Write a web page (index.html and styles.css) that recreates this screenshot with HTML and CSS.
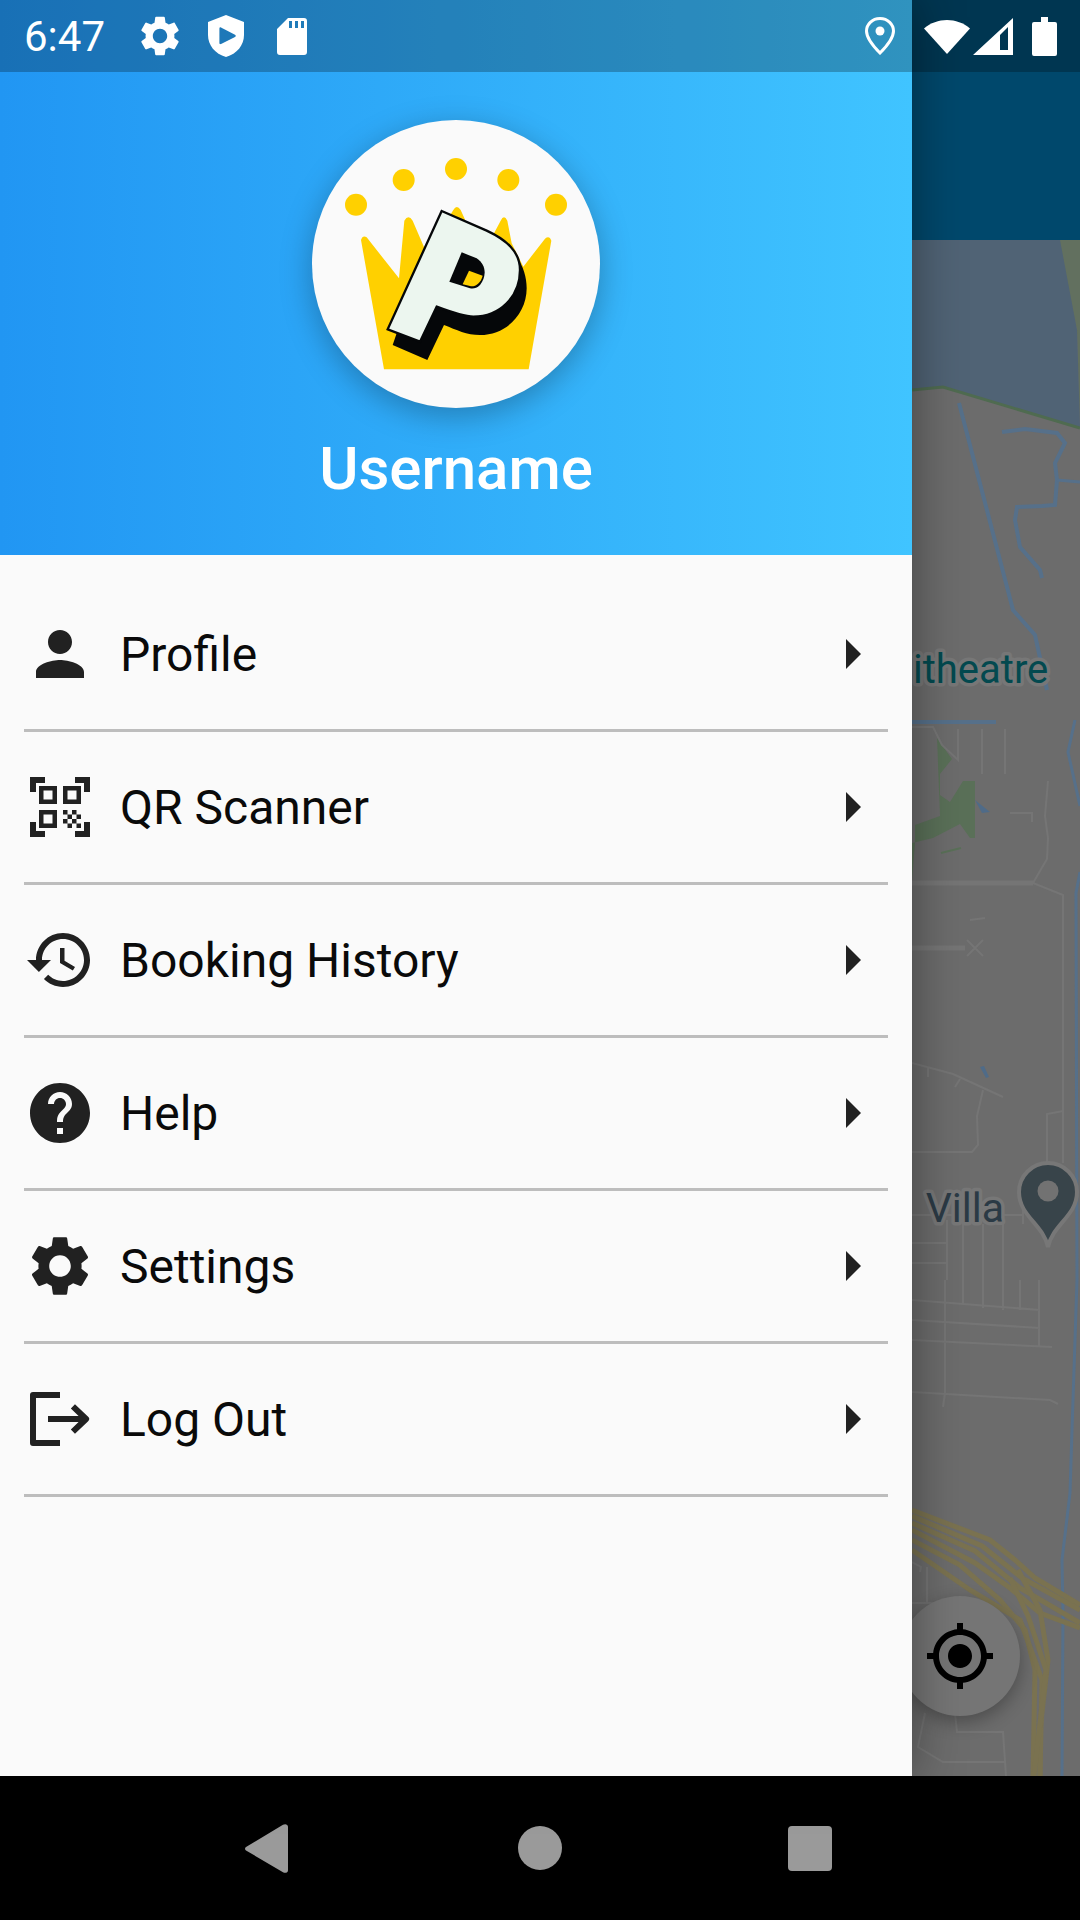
FILE: index.html
```html
<!DOCTYPE html>
<html lang="en">
<head>
  <meta charset="UTF-8">
  <meta name="viewport" content="width=device-width, initial-scale=1.0">
  <title>Drawer</title>
  <link rel="stylesheet" href="styles.css">
</head>
<body>
  <div class="screen">
    <div class="statusbar">
      <span class="time">6:47</span>
      <svg class="st-gear" viewBox="0 0 24 24"><path d="M19.14 12.94c.04-.3.06-.61.06-.94 0-.32-.02-.64-.07-.94l2.03-1.58c.18-.14.23-.41.12-.61l-1.92-3.32c-.12-.22-.37-.29-.59-.22l-2.39.96c-.5-.38-1.03-.7-1.62-.94l-.36-2.54c-.04-.24-.24-.41-.48-.41h-3.84c-.24 0-.43.17-.47.41l-.36 2.54c-.59.24-1.13.57-1.62.94l-2.39-.96c-.22-.08-.47 0-.59.22L2.74 8.87c-.12.21-.08.47.12.61l2.03 1.58c-.05.3-.09.63-.09.94s.02.64.07.94l-2.03 1.58c-.18.14-.23.41-.12.61l1.92 3.32c.12.22.37.29.59.22l2.39-.96c.5.38 1.03.7 1.62.94l.36 2.54c.05.24.24.41.48.41h3.84c.24 0 .44-.17.47-.41l.36-2.54c.59-.24 1.13-.56 1.62-.94l2.39.96c.22.08.47 0 .59-.22l1.92-3.32c.12-.22.07-.47-.12-.61l-2.01-1.58zM12 15.6c-1.98 0-3.6-1.62-3.6-3.6s1.62-3.6 3.6-3.6 3.6 1.62 3.6 3.6-1.62 3.6-3.6 3.6z"/></svg>
      <svg class="st-shield" viewBox="0 0 36 42"><path fill-rule="evenodd" d="M18 0L0 7v13c0 10 7 19 18 22 11-3 18-12 18-22V7zM13 12.5l14 7.2c1 .6 1 1.6 0 2.2l-14 7.2c-1 .4-1.6 0-1.6-1V13.5c0-1 .6-1.4 1.6-1z"/></svg>
      <svg class="st-sd" viewBox="0 0 30 37"><path fill-rule="evenodd" d="M11 0h16a3 3 0 0 1 3 3v31a3 3 0 0 1-3 3H3a3 3 0 0 1-3-3V11zM12 3v7h3V3zM18 3v7h3V3zM24 3v7h3V3z"/></svg>
      <svg class="st-pin" viewBox="0 0 30 38"><path class="pin-line" d="M15 1.5C7 1.5 1.5 7.5 1.5 14c0 7 7.5 16 13.5 22 6-6 13.500-15 13.500-22C28.500 7.500 23 1.500 15 1.500z"/><circle cx="15" cy="14" r="4.500"/></svg>
      <svg class="st-wifi" viewBox="0 0 46 40"><path d="M0 12.500C13 1 33 1 46 12.500L23 38z"/></svg>
      <svg class="st-signal" viewBox="0 0 40 37"><path fill-rule="evenodd" d="M40 0v37H0zM27 17v15h8V9z"/></svg>
      <svg class="st-battery" viewBox="0 0 25 39"><path d="M9 0h7v5h7a2 2 0 0 1 2 2v30a2 2 0 0 1-2 2H2a2 2 0 0 1-2-2V7a2 2 0 0 1 2-2h7z"/></svg>
    </div>

    <div class="content">
      <div class="drawer">
        <div class="drawer-header">
          <div class="avatar">
            <svg class="logo" viewBox="66 60 864 864">
              <g fill="#ffd000">
                <circle cx="198" cy="314" r="33"/>
                <circle cx="341" cy="240" r="33"/>
                <circle cx="498" cy="207" r="33"/>
                <circle cx="655" cy="240" r="33"/>
                <circle cx="798" cy="314" r="33"/>
                <path d="M282 808L213 420q5-15 17-8l97 123 16-173q12-20 25 0l42 98 80-130q10-18 22 0l18 40 30 30h52l20-38q10-20 20 0l13 68 35 70 65-84q13-11 19 6l-68 386z"/>
              </g>
              <path fill="#050709" d="M320 700l-12 35 104 45 50-105c38 15 68 30 108 30 80 0 140-65 140-140 0-35-10-65-30-95L500 500z"/>
              <path fill="#ecf6ef" stroke="#050709" stroke-width="7" d="M455 333l135 59c60 28 100 63 100 118 0 80-60 140-140 140-30 0-70-15-110-30l-50 105-97-37z"/>
              <path fill="#050709" d="M515 457l45 18c30 20 30 55 10 80-10 10-20 12-30 10l-62-20z"/>
              <path fill="#ffd000" d="M537 512l41 15c-5 20-20 33-35 32l-25-6z"/>
            </svg>
          </div>
          <div class="username">Username</div>
        </div>

        <ul class="menu">
          <li class="menu-item">
            <svg class="menu-icon" viewBox="0 0 24 24"><path d="M12 12c2.210 0 4-1.790 4-4s-1.790-4-4-4-4 1.790-4 4 1.790 4 4 4zm0 2c-2.670 0-8 1.340-8 4v2h16v-2c0-2.660-5.330-4-8-4z"/></svg>
            <span class="menu-label">Profile</span>
            <svg class="menu-arrow" viewBox="0 0 24 24"><path d="M10 17l5-5-5-5v10z"/></svg>
          </li>
          <li class="menu-item">
            <svg class="menu-icon" viewBox="0 0 24 24"><path d="M9.500 6.500v3h-3v-3h3M11 5H5v6h6V5zm-1.500 9.500v3h-3v-3h3M11 13H5v6h6v-6zm6.500-6.500v3h-3v-3h3M19 5h-6v6h6V5zm-6 8h1.500v1.500H13V13zm1.500 1.500H16V16h-1.500v-1.500zM16 13h1.500v1.500H16V13zm-3 3h1.500v1.500H13V16zm1.500 1.500H16V19h-1.500v-1.500zM16 16h1.500v1.500H16V16zm1.500-1.500H19V16h-1.500v-1.500zm0 3H19V19h-1.500v-1.500zM22 7h-2V4h-3V2h5v5zm0 15v-5h-2v3h-3v2h5zM2 22h5v-2H4v-3H2v5zM2 2v5h2V4h3V2H2z"/></svg>
            <span class="menu-label">QR Scanner</span>
            <svg class="menu-arrow" viewBox="0 0 24 24"><path d="M10 17l5-5-5-5v10z"/></svg>
          </li>
          <li class="menu-item">
            <svg class="menu-icon" viewBox="0 0 24 24"><path d="M13 3c-4.970 0-9 4.030-9 9H1l3.890 3.890.07.140L9 12H6c0-3.870 3.130-7 7-7s7 3.130 7 7-3.130 7-7 7c-1.930 0-3.680-.79-4.940-2.060l-1.420 1.420C8.270 19.990 10.510 21 13 21c4.970 0 9-4.030 9-9s-4.030-9-9-9zm-1 5v5l4.280 2.540.72-1.210-3.500-2.080V8H12z"/></svg>
            <span class="menu-label">Booking History</span>
            <svg class="menu-arrow" viewBox="0 0 24 24"><path d="M10 17l5-5-5-5v10z"/></svg>
          </li>
          <li class="menu-item">
            <svg class="menu-icon" viewBox="0 0 24 24"><path d="M12 2C6.480 2 2 6.480 2 12s4.480 10 10 10 10-4.480 10-10S17.520 2 12 2zm1 17h-2v-2h2v2zm2.070-7.750l-.9.920C13.450 12.900 13 13.500 13 15h-2v-.5c0-1.100.450-2.100 1.170-2.830l1.240-1.260c.370-.360.590-.860.590-1.410 0-1.100-.9-2-2-2s-2 .9-2 2H8c0-2.210 1.790-4 4-4s4 1.790 4 4c0 .880-.360 1.680-.93 2.250z"/></svg>
            <span class="menu-label">Help</span>
            <svg class="menu-arrow" viewBox="0 0 24 24"><path d="M10 17l5-5-5-5v10z"/></svg>
          </li>
          <li class="menu-item">
            <svg class="menu-icon" viewBox="0 0 24 24"><path d="M19.14 12.94c.04-.3.06-.61.06-.94 0-.32-.02-.64-.07-.94l2.03-1.58c.18-.14.23-.41.12-.61l-1.92-3.32c-.12-.22-.37-.29-.59-.22l-2.39.96c-.5-.38-1.03-.7-1.62-.94l-.36-2.54c-.04-.24-.24-.41-.48-.41h-3.84c-.24 0-.43.17-.47.41l-.36 2.54c-.59.24-1.13.57-1.62.94l-2.39-.96c-.22-.08-.47 0-.59.22L2.74 8.87c-.12.21-.08.47.12.61l2.03 1.58c-.05.3-.09.63-.09.94s.02.64.07.94l-2.03 1.58c-.18.14-.23.41-.12.61l1.92 3.32c.12.22.37.29.59.22l2.39-.96c.5.38 1.03.7 1.62.94l.36 2.54c.05.24.24.41.48.41h3.84c.24 0 .44-.17.47-.41l.36-2.54c.59-.24 1.13-.56 1.62-.94l2.39.96c.22.08.47 0 .59-.22l1.92-3.32c.12-.22.07-.47-.12-.61l-2.01-1.58zM12 15.600c-1.980 0-3.600-1.620-3.600-3.600s1.620-3.600 3.600-3.600 3.600 1.620 3.600 3.600-1.620 3.600-3.600 3.600z"/></svg>
            <span class="menu-label">Settings</span>
            <svg class="menu-arrow" viewBox="0 0 24 24"><path d="M10 17l5-5-5-5v10z"/></svg>
          </li>
          <li class="menu-item">
            <svg class="menu-icon" viewBox="0 0 24 24"><path class="logout-line" d="M12 4H3v16h9M8 12h13M16.300 7.800l4.400 4.200-4.400 4.200"/></svg>
            <span class="menu-label">Log Out</span>
            <svg class="menu-arrow" viewBox="0 0 24 24"><path d="M10 17l5-5-5-5v10z"/></svg>
          </li>
        </ul>
      </div>

      <div class="scene">
        <div class="appbar"></div>
        <div class="map">
          <!-- map tiles, coordinates are screen pixels -->
          <svg class="map-tiles" viewBox="912 240 168 1536">
            <rect class="land" x="912" y="240" width="168" height="1536"/>
            <path class="shore" d="M1058 240h22v188l-3-98z"/>
            <path class="water" d="M912 240h148l17 90 3 98-137-41-31 3z"/>
            <path class="shore-line" d="M912 390l31-3 137 41"/>
            <path class="park" d="M937 738l15 21-12 15v21l10 7 13-21h12v57h-5l-10-14-27 14-21 5v37l3-37 0-18 25-9z"/>
            <path class="park-line" d="M941 853l20-5"/>
            <path class="pond" d="M975 800l15 12-8 1zM980 1067l4-1 5 11-3 1z"/>
            <g class="roads">
              <path d="M912 727h21l9 18 16 15v-31M982 729v45M1005 729v45M1010 813h22v9"/>
              <path d="M1048 781l-3 35 3 22-1 21-14 24 30 12v268M1047 1163v-49l16-3"/>
              <path class="road-wide" d="M912 883h121M912 948h53"/>
              <path d="M967 940l16 16M983 940l-16 16M970 920l15-2"/>
              <path d="M912 1063l41 11 50 23M983 1090l-6 26 1 29-6 7h-60M928 1068v9M960 1079l-5 8"/>
              <path d="M912 1215h111M963 1224v56M983 1224v56M1003 1224v56M1023 1224v-43M912 1243h35M912 1263h35M947 1220v60"/>
              <path d="M912 1300l128 10M912 1320l128 8M912 1340l140 7M912 1392l138 8 8 4M945 1280v113M963 1280v25M983 1280v28M1003 1280v30M1020 1280v30M1039 1280v67"/>
              <path d="M945 1393l-2 14M912 1562l9 5-1 5M927 1567v36M912 1603h48M955 1713l2 19h46l3 44M925 1713l-7 34 25 15h63"/>
            </g>
            <g class="rivers">
              <path d="M959 403l54 207 22 25 12 55"/>
              <path d="M1002 432l23-3 32 4 8 10-10 20 2 17-2 25-13 1-25 1-2 13 5 27 20 23 2 8"/>
              <path class="river-thin" d="M1057 480l23 2M1075 720l-7 32 12 54M1080 872l-4 21 1 387-5 150-2 63-8 67 1 53-1 163"/>
              <path class="river-wide" d="M912 722h84"/>
            </g>
            <g class="highways">
              <path d="M912 1510l78 30 25 20 20 18 45 27"/>
              <path d="M912 1516l70 30 40 32 58 32"/>
              <path d="M912 1523l63 28 45 37 60 35"/>
              <path d="M912 1530l63 33 35 25 30 25 40 15"/>
              <path d="M912 1540l48 25 40 35 25 30 10 40-2 106"/>
              <path d="M912 1550l58 40 50 30 22 60-2 96"/>
              <path d="M1018 1570l22 40 8 50-8 70v46"/>
              <path d="M1010 1578l18 38 18 54-12 106"/>
            </g>
            <text class="map-label map-teal" x="913" y="683">itheatre</text>
            <text class="map-label map-slate" x="1004" y="1222" text-anchor="end">Villa</text>
            <path class="map-pin" d="M1048 1163c-16 0-29 13-29 29 0 24 24 32 29 55 5-23 29-31 29-55 0-16-13-29-29-29z"/>
            <circle class="map-pin-dot" cx="1048" cy="1191" r="10.500"/>
          </svg>
          <div class="fab">
            <svg class="fab-icon" viewBox="0 0 24 24"><path d="M12 8c-2.210 0-4 1.790-4 4s1.790 4 4 4 4-1.790 4-4-1.790-4-4-4zm8.940 3c-.46-4.170-3.770-7.480-7.940-7.940V1h-2v2.060C6.830 3.520 3.520 6.830 3.060 11H1v2h2.060c.46 4.170 3.770 7.480 7.940 7.940V23h2v-2.060c4.170-.46 7.480-3.770 7.940-7.940H23v-2h-2.060zM12 19c-3.870 0-7-3.130-7-7s3.130-7 7-7 7 3.130 7 7-3.130 7-7 7z"/></svg>
          </div>
        </div>
      </div>
    </div>

    <div class="navbar">
      <svg class="nav-back" viewBox="0 0 43 49"><path d="M1 26.500c-1.300-1-1.300-2.500 0-3.500L38 .8c2-1.300 5-.6 5 2v43.400c0 2.600-3 3.300-5 2z"/></svg>
      <div class="nav-home"></div>
      <div class="nav-recent"></div>
    </div>
  </div>
</body>
</html>
```

FILE: styles.css
```css
* {
  box-sizing: border-box;
}
body {
  margin: 0;
  font-family: Roboto, "Liberation Sans", sans-serif;
  background-color: #000;
}
.screen {
  position: relative;
  display: flex;
  flex-direction: column;
  width: 1080px;
  height: 1920px;
  overflow: hidden;
}

/* status bar, tints what is under it */
.statusbar {
  position: absolute;
  top: 0;
  left: 0;
  z-index: 5;
  display: flex;
  align-items: center;
  width: 1080px;
  height: 72px;
  padding-left: 24px;
  background-color: rgba(0,0,0,0.25);
  color: #fff;
}
.statusbar svg {
  flex: none;
  fill: #fff;
}
.time {
  width: 80px;
  font-size: 42px;
}
.st-gear {
  width: 48px;
  height: 48px;
  margin-left: 32px;
}
.st-shield {
  width: 36px;
  height: 42px;
  margin-left: 24px;
}
.st-sd {
  width: 30px;
  height: 37px;
  margin-left: 33px;
}
.st-pin {
  width: 30px;
  height: 38px;
  margin-left: auto;
}
.pin-line {
  fill: none;
  stroke: #fff;
  stroke-width: 3;
}
.st-wifi {
  width: 46px;
  height: 40px;
  margin-left: 29px;
}
.st-signal {
  width: 40px;
  height: 37px;
  margin-left: 3px;
}
.st-battery {
  width: 25px;
  height: 39px;
  margin-left: 19px;
  margin-right: 23px;
}

.content {
  display: flex;
  height: 1776px;
}

/* drawer */
.drawer {
  position: relative;
  z-index: 2;
  flex: none;
  width: 912px;
  background-color: #fafafa;
  box-shadow: 0 0 48px rgba(0,0,0,0.4);
}
.drawer-header {
  display: flex;
  flex-direction: column;
  align-items: center;
  height: 555px;
  padding-top: 120px;
  background: linear-gradient(to right, #2196f3, #40c4ff);
}
.avatar {
  width: 288px;
  height: 288px;
  border-radius: 50%;
  background-color: #fafafa;
  box-shadow: 0 8px 32px rgba(0,0,0,0.28);
}
.logo {
  display: block;
  width: 288px;
  height: 288px;
}
.username {
  margin-top: 33px;
  font-size: 60px;
  line-height: 56px;
  font-weight: 500;
  color: #fff;
}
.menu {
  margin: 0;
  padding: 24px 24px 0;
  list-style: none;
}
.menu-item {
  display: flex;
  align-items: center;
  height: 153px;
  border-bottom: 3px solid #bdbdbd;
}
.menu-icon {
  flex: none;
  width: 72px;
  height: 72px;
  fill: #212121;
}
.logout-line {
  fill: none;
  stroke: #212121;
  stroke-width: 2;
  stroke-linejoin: round;
}
.menu-label {
  flex: 1;
  margin-left: 24px;
  font-size: 48px;
  color: #0a0a0a;
}
.menu-arrow {
  flex: none;
  width: 72px;
  height: 72px;
  fill: #212121;
}

/* map behind the drawer */
.scene {
  display: flex;
  flex: 1;
  flex-direction: column;
}
.appbar {
  flex: none;
  height: 240px;
  background-color: #00486c;
}
.map {
  position: relative;
  flex: 1;
}
.map-tiles {
  display: block;
  width: 168px;
  height: 1536px;
}
.land {
  fill: #6c6c6c;
}
.shore {
  fill: #62705f;
}
.water {
  fill: #506375;
}
.shore-line {
  fill: none;
  stroke: #4f6b50;
  stroke-width: 3;
}
.park {
  fill: #5a7058;
}
.park-line {
  fill: none;
  stroke: #5a7058;
  stroke-width: 2;
}
.pond {
  fill: #4f6b88;
}
.roads path {
  fill: none;
  stroke: #757575;
  stroke-width: 2;
}
.roads .road-wide {
  stroke-width: 5;
}
.rivers path {
  fill: none;
  stroke: #56708a;
  stroke-width: 4;
}
.rivers .river-thin {
  stroke-width: 3;
}
.highways path {
  fill: none;
  stroke: #7a7250;
  stroke-width: 5;
}
.map-label {
  font-size: 41px;
  paint-order: stroke;
  stroke: #777;
  stroke-width: 7px;
  stroke-linejoin: round;
}
.map-teal {
  font-size: 40px;
  fill: #03494f;
}
.map-slate {
  fill: #2b3a45;
}
.map-pin {
  fill: #38444a;
  stroke: #777;
  stroke-width: 4;
}
.map-pin-dot {
  fill: #727272;
}
.fab {
  position: absolute;
  right: 60px;
  bottom: 60px;
  display: flex;
  align-items: center;
  justify-content: center;
  width: 120px;
  height: 120px;
  border-radius: 50%;
  background-color: #757575;
  box-shadow: 0 6px 18px rgba(0,0,0,0.3);
}
.fab-icon {
  width: 72px;
  height: 72px;
  fill: #000;
}

/* android nav buttons */
.navbar {
  display: flex;
  flex: none;
  align-items: center;
  gap: 230px;
  height: 144px;
  padding-left: 245px;
  background-color: #000;
}
.nav-back {
  width: 43px;
  height: 49px;
  fill: #9a9a9a;
}
.nav-home {
  width: 44px;
  height: 44px;
  border-radius: 50%;
  background-color: #9a9a9a;
}
.nav-recent {
  width: 44px;
  height: 45px;
  margin-left: -4px;
  border-radius: 4px;
  background-color: #9a9a9a;
}
```
